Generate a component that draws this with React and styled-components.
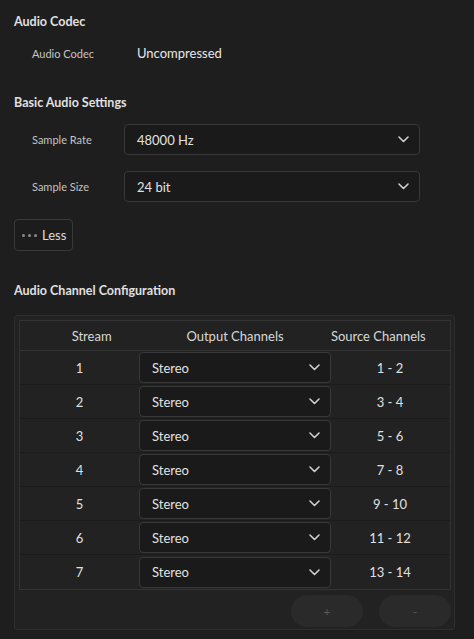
import React from 'react';
import styled, {createGlobalStyle} from 'styled-components';

const Global = createGlobalStyle`
    html, body {
        margin: 0;
        padding: 0;
        background: #1e1e1e;
    }
    body {
        font-family: Lato, "Open Sans", sans-serif;
        color: #dcdcdc;
    }
`;

const Page = styled.div`
    width: 474px;
    height: 639px;
    box-sizing: border-box;
    padding: 14px 14px 0 14px;
    background: #1e1e1e;
    overflow: hidden;
`;

const SectionTitle = styled.div`
    font-size: 12.5px;
    font-weight: 700;
    line-height: 16px;
    color: #e0e0e0;
    margin-top: ${p => p.$top || 0}px;
`;

const InfoRow = styled.div`
    display: flex;
    align-items: center;
    height: 30px;
    margin-top: 8px;
    padding-left: 18px;
`;

const Label = styled.span`
    width: ${p => p.$w || 92}px;
    flex-shrink: 0;
    font-size: 11px;
    color: #c4c4c4;
`;

const Value = styled.span`
    font-size: 13px;
    color: #e8e8e8;
`;

const FieldRow = styled.div`
    display: flex;
    align-items: center;
    padding-left: 18px;
    margin-top: ${p => p.$top || 0}px;
`;

const Select = styled.div`
    display: flex;
    align-items: center;
    justify-content: space-between;
    box-sizing: border-box;
    width: ${p => p.$w}px;
    height: 31px;
    padding: 0 10px 0 12px;
    background: #1a1a1a;
    border: 1px solid #383838;
    border-radius: 4px;
    font-size: 13px;
    color: #e2e2e2;
`;

const LessButton = styled.button`
    display: flex;
    align-items: center;
    gap: 5px;
    box-sizing: border-box;
    margin-top: 17px;
    width: 59px;
    height: 32px;
    padding: 0 0 0 7px;
    background: #1c1c1c;
    border: 1px solid #3a3a3a;
    border-radius: 4px;
    font-family: inherit;
    font-size: 13px;
    color: #dcdcdc;
`;

const Dots = styled.span`
    display: flex;
    gap: 3px;
    & > i {
        width: 3px;
        height: 3px;
        border-radius: 50%;
        background: #8a8a8a;
    }
`;

const Panel = styled.div`
    margin-top: 16px;
    width: 441px;
    box-sizing: border-box;
    padding: 4px 3px 1px 4px;
    background: #222222;
    border: 1px solid #2e2e2e;
    border-radius: 3px;
`;

const Table = styled.div`
    border: 1px solid #333333;
`;

const HeaderRow = styled.div`
    display: grid;
    grid-template-columns: 1fr 1fr 1fr;
    height: 29px;
    align-items: center;
    border-bottom: 1px solid #333333;
    font-size: 13px;
    color: #d8d8d8;
    text-align: center;
`;

const Row = styled.div`
    display: grid;
    grid-template-columns: 119px 191px 1fr;
    height: 34px;
    box-sizing: border-box;
    align-items: center;
    border-bottom: ${p => p.$last ? 'none' : '1px solid #1b1b1b'};
    font-size: 13px;
    color: #e0e0e0;
    text-align: center;
`;

const RowSelect = styled(Select)`
    justify-self: start;
    text-align: left;
`;

const Footer = styled.div`
    display: flex;
    justify-content: flex-end;
    gap: 16px;
    padding: 5px 0 1px 0;
`;

const PillButton = styled.button`
    width: 72px;
    height: 32px;
    border: none;
    border-radius: 16px;
    background: #2a2a2a;
    color: #5a5a5a;
    font-family: inherit;
    font-size: 12px;
`;

const Chevron = () => (
    <svg width="11" height="7" viewBox="0 0 11 7">
        <path d="M1 1l4.5 4.5L10 1" fill="none" stroke="#cfcfcf" strokeWidth="1.6" strokeLinecap="round" strokeLinejoin="round"/>
    </svg>
);

const streams = [
    [1, '1 - 2'],
    [2, '3 - 4'],
    [3, '5 - 6'],
    [4, '7 - 8'],
    [5, '9 - 10'],
    [6, '11 - 12'],
    [7, '13 - 14'],
];

export default function App() {
    return (
        <Page>
            <Global/>
            <SectionTitle>Audio Codec</SectionTitle>
            <InfoRow>
                <Label $w={105}>Audio Codec</Label>
                <Value>Uncompressed</Value>
            </InfoRow>

            <SectionTitle $top={27}>Basic Audio Settings</SectionTitle>
            <FieldRow $top={13}>
                <Label>Sample Rate</Label>
                <Select $w={296}>48000 Hz<Chevron/></Select>
            </FieldRow>
            <FieldRow $top={16}>
                <Label>Sample Size</Label>
                <Select $w={296}>24 bit<Chevron/></Select>
            </FieldRow>
            <LessButton><Dots><i/><i/><i/></Dots>Less</LessButton>

            <SectionTitle $top={32}>Audio Channel Configuration</SectionTitle>
            <Panel>
                <Table>
                    <HeaderRow>
                        <span>Stream</span>
                        <span>Output Channels</span>
                        <span>Source Channels</span>
                    </HeaderRow>
                    {streams.map(([n, src], i) => (
                        <Row key={n} $last={i === streams.length - 1}>
                            <span>{n}</span>
                            <RowSelect $w={192}>Stereo<Chevron/></RowSelect>
                            <span>{src}</span>
                        </Row>
                    ))}
                </Table>
                <Footer>
                    <PillButton>+</PillButton>
                    <PillButton>-</PillButton>
                </Footer>
            </Panel>
        </Page>
    );
}
